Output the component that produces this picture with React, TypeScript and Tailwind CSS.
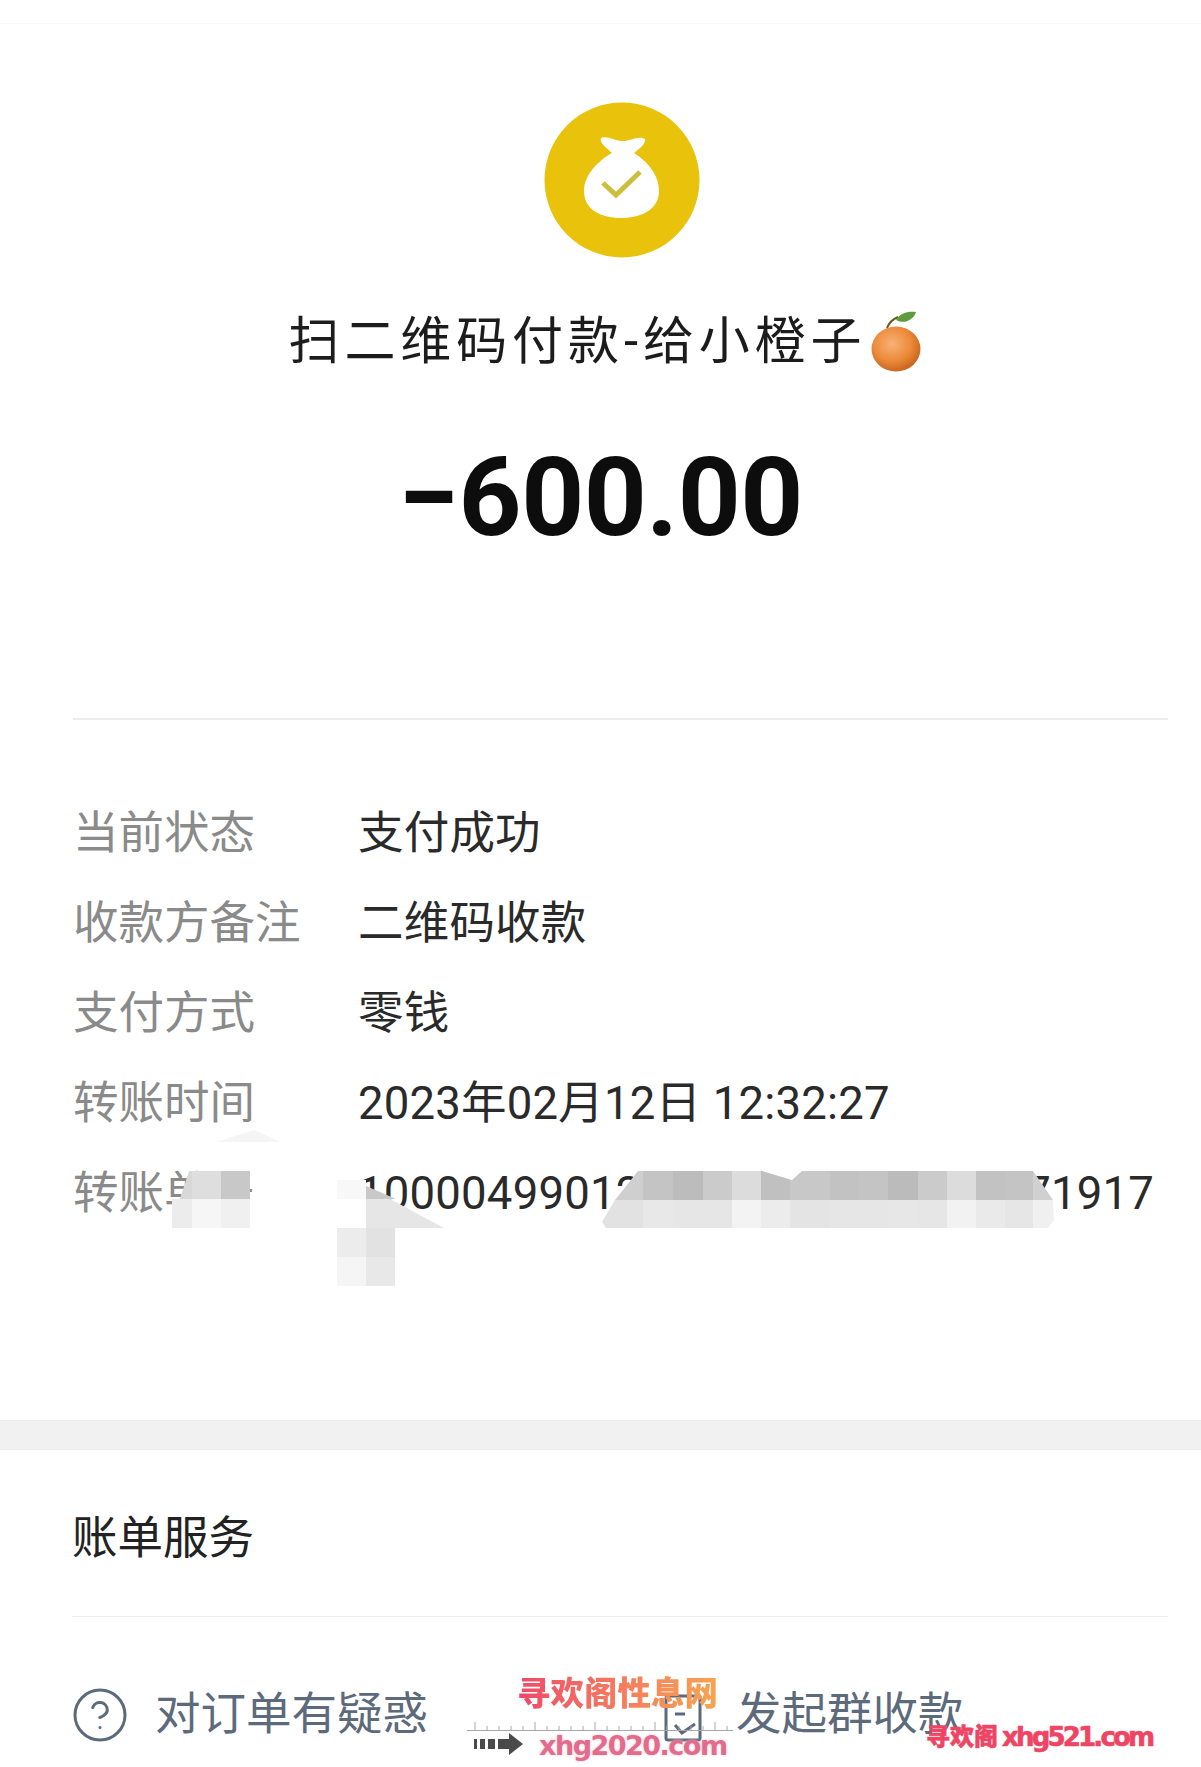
import { CircleHelp } from "lucide-react"

const rows = [
  { label: "当前状态", value: "支付成功" },
  { label: "收款方备注", value: "二维码收款" },
  { label: "支付方式", value: "零钱" },
  { label: "转账时间", value: "2023年02月12日 12:32:27" },
]

// mosaic tiles over the redacted order number
const upperTiles = [
  "w-[41px] bg-[#cfcfcf]", "w-[30px] bg-[#c4c4c4]", "w-[30px] bg-[#bcbcbc]", "w-[29px] bg-[#cbcbcb]",
  "w-[29px] bg-[#dcdcdc]", "w-[29px] bg-[#c0c0c0]", "w-[40px] bg-[#c8c8c8]", "w-[29px] bg-[#c2c2c2]",
  "w-[29px] bg-[#c4c4c4]", "w-[30px] bg-[#bbbbbb]", "w-[29px] bg-[#cbcbcb]", "w-[29px] bg-[#dcdcdc]",
  "w-[29px] bg-[#c2c2c2]", "w-[28px] bg-[#c4c4c4]", "w-[21px] bg-[#d0d0d0]",
]
const lowerTiles = [
  "w-[41px] bg-[#e2e2e2]", "w-[30px] bg-[#e8e8e8]", "w-[30px] bg-[#e6e6e6]", "w-[29px] bg-[#e6e6e6]",
  "w-[29px] bg-[#f3f3f3]", "w-[29px] bg-[#ececec]", "w-[40px] bg-[#e4e4e4]", "w-[29px] bg-[#e6e6e6]",
  "w-[29px] bg-[#e6e6e6]", "w-[30px] bg-[#e7e7e7]", "w-[29px] bg-[#e6e6e6]", "w-[29px] bg-[#f2f2f2]",
  "w-[29px] bg-[#eaeaea]", "w-[28px] bg-[#e6e6e6]", "w-[21px] bg-[#f0f0f0]",
]

function BagIcon() {
  return (
    <svg width="156" height="156" viewBox="0 0 156 156">
      <circle cx="78" cy="78" r="77.5" fill="#e9c20b" />
      <path
        d="M57 36C62 33 72 39 79 39C86 39 95 33 101 37C102 42 95 47 90 51C104 60 115 73 115 89C115 107 98 116 77 116C56 116 40 107 40 89C40 73 54 59 68 51C63 46 55 41 57 36Z"
        fill="#fff"
      />
      <path d="M59 81L72 93L96 70" fill="none" stroke="#cdbf3e" strokeWidth="5" />
    </svg>
  )
}

function OrangeEmoji() {
  return (
    <svg width="52" height="62" viewBox="0 0 52 62" className="ml-[4px]">
      <defs>
        <radialGradient id="orange" cx="0.42" cy="0.38" r="0.7">
          <stop offset="0" stopColor="#f8b277" />
          <stop offset="0.55" stopColor="#ec8a3a" />
          <stop offset="1" stopColor="#bd5a17" />
        </radialGradient>
      </defs>
      <ellipse cx="25" cy="38" rx="24.5" ry="22.5" fill="url(#orange)" />
      <path d="M16 17C18 12 22 8 27 6" fill="none" stroke="#6b5a1e" strokeWidth="2" />
      <path d="M25 9C29 2 37 0 45 1C43 8 34 14 25 9Z" fill="#5f9a3c" />
    </svg>
  )
}

function BillIcon() {
  return (
    <svg width="38" height="48" viewBox="0 0 38 48" fill="none" stroke="#5c6a7c" strokeWidth="3">
      <rect x="2" y="2" width="34" height="44" rx="2" />
      <path d="M11 20H21" />
      <path d="M11 31L18 39L31 30" />
    </svg>
  )
}

function ArrowMark() {
  return (
    <svg width="50" height="22" viewBox="0 0 50 22" fill="#4a4a4a">
      <path d="M0 6h3v10H0zM6 6h5v10H6zM14 6h7v10h-7zM24 6h11V0l14 11L35 22v-6H24z" />
    </svg>
  )
}

function Ruler() {
  return (
    <svg width="266" height="12" viewBox="0 0 266 12" stroke="#a8a8a8">
      <path d="M0 10.5H266" />
      {Array.from({ length: 22 }).map((_, i) => (
        <path key={i} d={`M${8 + i * 12} ${i % 5 === 0 ? 2 : 6}V10`} />
      ))}
    </svg>
  )
}

export default function App() {
  return (
    <div className="relative w-[1201px] h-[1767px] overflow-hidden bg-white font-['Roboto','Noto_Sans_CJK_SC',sans-serif]">
      <div className="h-[24px] border-b border-[#f8f8f8]"></div>

      <div className="mt-[78px] flex justify-center pl-[42px]">
        <BagIcon />
      </div>

      <div className="mt-[54px] h-[60px] flex items-center justify-center pl-[10px] text-[#1c1c1c]">
        <span className="text-[51px] tracking-[4.9px] leading-[60px]">扫二维码付款-给小橙子</span>
        <OrangeEmoji />
      </div>

      <div className="mt-[66px] h-[120px] flex items-center justify-center text-[110px] leading-[120px] font-bold tracking-[-0.5px] text-[#0d0d0d]">
        −600.00
      </div>

      <div className="mt-[160px] ml-[73px] mr-[33px] border-t-2 border-[#ededed]"></div>

      <div className="mt-[69px] pl-[73px]">
        {rows.map((row) => (
          <div key={row.label} className="h-[90px] flex items-center text-[45.5px] leading-[60px]">
            <span className="w-[285px] text-[#8a8a8a]">{row.label}</span>
            <span className="text-[#2a2a2a] tracking-[0.2px]">{row.value}</span>
          </div>
        ))}
        <div className="h-[90px] flex items-center text-[45.5px] leading-[60px]">
          <span className="w-[285px] text-[#8a8a8a]">转账单号</span>
          <span className="w-[796px] flex justify-between text-[#2a2a2a] tracking-[0.2px]">
            <span>10000499012</span>
            <span>71917</span>
          </span>
        </div>
      </div>

      <div className="mt-[181px] h-[30px] bg-[#f1f1f1] border-t border-b border-[#ececec]"></div>

      <div className="h-[167px] pt-[12px] flex items-center border-b border-[#eeeeee] mr-[33px] ml-[72px] text-[45.5px] leading-[60px] text-[#222222]">
        账单服务
      </div>

      <div className="mt-[68px] h-[60px] pl-[70px] flex items-center text-[45.5px] leading-[60px] text-[#5c6a7c]">
        <CircleHelp size={60} strokeWidth={1.2} className="text-[#5c6a7c]" />
        <span className="ml-[25px]">对订单有疑惑</span>
        <span className="ml-[236px] mt-[6px] flex"><BillIcon /></span>
        <span className="ml-[34px]">发起群收款</span>
      </div>

      {/* mosaic patches */}
      <div className="absolute left-[216px] top-[1130px] w-[64px] h-[12px] bg-[#f5f5f5] [clip-path:polygon(0_100%,60%_0,100%_100%)]"></div>
      <div className="absolute left-[172px] top-[1171px] w-[78px] flex flex-col">
        <div className="h-[28px] flex [clip-path:polygon(10%_100%,22%_0,100%_0,100%_100%)]">
          <div className="w-[20px] bg-[#d8d8d8]"></div>
          <div className="w-[29px] bg-[#dedede]"></div>
          <div className="w-[29px] bg-[#c8c8c8]"></div>
        </div>
        <div className="h-[29px] flex">
          <div className="w-[20px] bg-[#ececec]"></div>
          <div className="w-[29px] bg-[#f6f6f6]"></div>
          <div className="w-[29px] bg-[#f0f0f0]"></div>
        </div>
      </div>

      <div className="absolute left-[337px] top-[1180px] w-[29px] h-[19px] bg-[#f8f8f8]"></div>
      <div className="absolute left-[366px] top-[1186px] w-[78px] h-[42px] bg-[#e6e6e6] [clip-path:polygon(0_0,100%_100%,0_100%)]"></div>
      <div className="absolute left-[366px] top-[1186px] w-[30px] h-[13px] bg-[#c8c8c8] [clip-path:polygon(0_0,100%_100%,0_100%)]"></div>
      <div className="absolute left-[337px] top-[1228px] grid grid-cols-[29px_29px] grid-rows-[29px_29px]">
        <div className="bg-[#ececec]"></div>
        <div className="bg-[#e2e2e2]"></div>
        <div className="bg-[#f5f5f5]"></div>
        <div className="bg-[#e8e8e8]"></div>
      </div>

      <div className="absolute left-[602px] top-[1171px] w-[452px] flex flex-col">
        <div className="h-[29px] flex [clip-path:polygon(13px_100%,36px_0,160px_0,190px_9px,200px_0,431px_0,451px_100%)]">
          {upperTiles.map((c, i) => (
            <div key={i} className={c}></div>
          ))}
        </div>
        <div className="h-[28px] flex [clip-path:polygon(13px_0,451px_0,452px_20px,446px_100%,4px_100%,0_22px)]">
          {lowerTiles.map((c, i) => (
            <div key={i} className={c}></div>
          ))}
        </div>
      </div>

      {/* watermarks */}
      <div className="absolute left-[517px] top-[1672px] text-[33.5px] leading-[44px] font-black bg-gradient-to-r from-[#ee4868] to-[#f7a44e] bg-clip-text text-transparent">
        寻欢阁性息网
      </div>
      <div className="absolute left-[467px] top-[1720px]">
        <Ruler />
      </div>
      <div className="absolute left-[474px] top-[1733px]">
        <ArrowMark />
      </div>
      <div className="absolute left-[539px] top-[1728px] text-[27px] leading-[36px] font-bold font-['DejaVu_Sans',sans-serif] tracking-[-1.5px] text-[#e36b8b] [text-shadow:0_0_3px_#f9c8d4]">
        xhg2020.com
      </div>
      <div className="absolute left-[926px] top-[1720px] flex items-center text-[#ee4565] font-black leading-[34px] [-webkit-text-stroke:0.6px_#ee4565]">
        <span className="text-[24px]">寻欢阁</span>
        <span className="ml-[4px] text-[26px] font-bold font-['DejaVu_Sans',sans-serif] tracking-[-2.8px]">xhg521.com</span>
      </div>
    </div>
  )
}
